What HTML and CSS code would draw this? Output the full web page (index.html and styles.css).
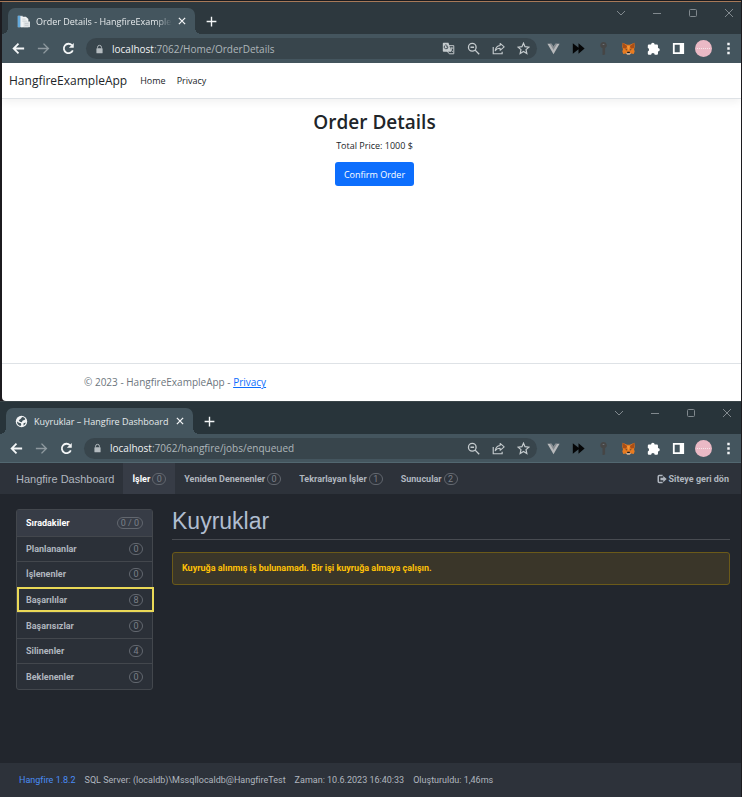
FILE: index.html
```html
<!DOCTYPE html>
<html lang="tr">
<head>
<meta charset="utf-8">
<title>Hangfire Dashboard</title>
<link rel="stylesheet" href="styles.css">
</head>
<body>
<svg class="sprite" aria-hidden="true">
  <symbol id="back" viewBox="0 0 16 16"><path d="M14 8H3M8 2.8 2.8 8 8 13.2" fill="none" stroke="currentColor" stroke-width="1.9"/></symbol>
  <symbol id="forward" viewBox="0 0 16 16"><path d="M2 8h11M8 2.8 13.2 8 8 13.2" fill="none" stroke="currentColor" stroke-width="1.5"/></symbol>
  <symbol id="reload" viewBox="0 0 16 16"><path d="M12.6 10a5 5 0 1 1-1-5.6" fill="none" stroke="currentColor" stroke-width="1.9"/><path d="M13.6 2v5.200H8.400z" fill="currentColor"/></symbol>
  <symbol id="lock" viewBox="0 0 16 16"><path d="M4.500 7V5a3.500 3.500 0 0 1 7 0v2" fill="none" stroke="currentColor" stroke-width="1.700"/><rect x="2.500" y="6.500" width="11" height="9" rx="1" fill="currentColor"/></symbol>
  <symbol id="close" viewBox="0 0 16 16"><path d="m3 3 10 10M13 3 3 13" fill="none" stroke="currentColor" stroke-width="2"/></symbol>
  <symbol id="plus" viewBox="0 0 16 16"><path d="M8 2v12M2 8h12" fill="none" stroke="currentColor" stroke-width="1.700"/></symbol>
  <symbol id="w-down" viewBox="0 0 10 10"><path d="m1 3 4 4 4-4" fill="none" stroke="currentColor"/></symbol>
  <symbol id="w-min" viewBox="0 0 10 10"><path d="M1 5.500h8" fill="none" stroke="currentColor"/></symbol>
  <symbol id="w-max" viewBox="0 0 10 10"><rect x="1.500" y="1.500" width="7" height="7" rx="1" fill="none" stroke="currentColor"/></symbol>
  <symbol id="w-close" viewBox="0 0 10 10"><path d="m1 1 8 8M9 1 1 9" fill="none" stroke="currentColor"/></symbol>
  <symbol id="translate" viewBox="0 0 16 16"><path d="M6 4.500h8.500v10H9L6 11z" fill="none" stroke="currentColor" stroke-width="1.200"/><path d="M2 1h6l3.500 11H2a1 1 0 0 1-1-1V2a1 1 0 0 1 1-1z" fill="currentColor"/><path d="M7.300 5.800H5.200M7.300 6A2.300 2.300 0 1 1 6.500 4.300" fill="none" stroke="#38454c" stroke-width="1.100"/><path d="M9.500 7.500H14M12 6.500v1c0 2-1 3-2 3.500M10.500 8.500c.5 1.500 1.500 2.500 3 3.500" fill="none" stroke="currentColor" stroke-width="1"/></symbol>
  <symbol id="zoomout" viewBox="0 0 16 16"><circle cx="6.500" cy="6.500" r="4.700" fill="none" stroke="currentColor" stroke-width="1.600"/><path d="m10 10 5 5M4.300 6.500h4.400" fill="none" stroke="currentColor" stroke-width="1.700"/></symbol>
  <symbol id="share" viewBox="0 0 16 16"><path d="M1.500 6v8.500h11V12" fill="none" stroke="currentColor" stroke-width="1.400"/><path d="M10 1.800 15 6l-5 4.200V7.800c-3 0-4.800 1-6 3 .3-3.500 2.500-6.200 6-6.600z" fill="none" stroke="currentColor" stroke-width="1.300" stroke-linejoin="round"/></symbol>
  <symbol id="star" viewBox="0 0 16 16"><path d="m8 1.500 1.900 4.300 4.700.5-3.500 3.100 1 4.700L8 11.700l-4.100 2.400 1-4.700L1.400 6.300l4.700-.5z" fill="none" stroke="currentColor" stroke-width="1.500"/></symbol>
  <symbol id="vue" viewBox="0 0 16 16"><path d="M.5 2h5L8 6.300 10.500 2h5L8 15z" fill="#b7b9bb"/><path d="M3.500 2h2.300L8 5.800 10.200 2h2.300L8 9.800z" fill="#858b90"/></symbol>
  <symbol id="ff" viewBox="0 0 16 16"><path d="M1 1.500 8 7V1.500L15.500 8 8 14.500V9l-7 5.500z" fill="#050607"/></symbol>
  <symbol id="key" viewBox="0 0 16 16"><path d="M8 0a4 4 0 0 1 2 7.500V15l-1.500 1H6.800V7.800A4 4 0 0 1 8 0z" fill="#464646"/><path d="M7 3h2" stroke="#778087" stroke-width="1"/></symbol>
  <symbol id="fox" viewBox="0 0 16 16"><path d="m.8.8 5.400 2.500h3.600L15.200.8l.5 5-.9 3 .8 3-1.200 3-3.300-.8-1.500 1.500H6.400l-1.500-1.500-3.300.8-1.200-3 .8-3-.9-3z" fill="#e87b20"/><path d="m.8.8 5.400 4-.9 3.400L1 7.500zM15.200.8l-5.400 4 .9 3.400 4.300-.7z" fill="#a94e16"/><path d="m6.200 4.800 1.800 6 1.800-6z" fill="#f39a39"/><path d="m4 8.500 2.500 1-.8 1zM12 8.500l-2.500 1 .8 1z" fill="#233447"/><path d="m5 14 1.500-1.300h3L11 14l-1.500 1.600h-3z" fill="#c0ad9e"/><path d="M6.500 12h3l.3 1.500H6.200z" fill="#1d1c1c"/></symbol>
  <symbol id="puzzle" viewBox="0 0 16 16"><path d="M5 3.200a2.200 2.200 0 0 1 4.400 0h2.800a1.300 1.300 0 0 1 1.300 1.300v2.900a2.200 2.200 0 0 1 0 4.400v2.700a1.300 1.300 0 0 1-1.300 1.300H9.500a2.200 2.200 0 0 0-4.400 0H2.300A1.300 1.300 0 0 1 1 14.500v-2.800a2.200 2.200 0 0 0 0-4.200v-3a1.300 1.300 0 0 1 1.300-1.300z" fill="#fff"/></symbol>
  <symbol id="panel" viewBox="0 0 16 16"><path d="M2.200 2.200h11.600v11.600H2.200z" fill="none" stroke="#fff" stroke-width="2.200"/><path d="M9.500 2H14v12H9.500z" fill="#fff"/></symbol>
  <symbol id="dots" viewBox="0 0 16 16"><path d="M6.500 1h3v3h-3zM6.500 6.500h3v3h-3zM6.500 12h3v3h-3z" fill="#f4f6f7"/></symbol>
  <symbol id="docs" viewBox="0 0 16 16"><path d="M1 1h6v14H1z" fill="#d5dde2"/><path d="M1 1h3v14H1z" fill="#63a9dc"/><path d="M5 2h6l3 3v10H5z" fill="#f1f3f4"/><path d="M8 8h8v7H8z" fill="#dfe3e5"/><path d="M6.500 5h4M6.500 7.500H12M9.500 10.500H14M9.500 12.800H14" stroke="#c3c9cd"/></symbol>
  <symbol id="globe" viewBox="0 0 16 16"><circle cx="8" cy="8" r="7" fill="#f2f4f5"/><path d="M8.800 2.500c2 .2 3 1 3.900 2.300l-1 1.500-2.200.5-1.200 2L6 8.300 4.500 6.600 6.800 5zM2.500 8l2.300 1.600 2.500.6.400 2-1.200 1.300A5.500 5.500 0 0 1 2.500 8zM10.500 10l2.800-.8c-.5 2-1.300 2.900-2.800 3.600z" fill="#42535b"/></symbol>
  <symbol id="exit" viewBox="0 0 16 16"><path d="M9 2.500H3.500a1.500 1.500 0 0 0-1.500 1.500v8a1.500 1.500 0 0 0 1.500 1.500H9" fill="none" stroke="currentColor" stroke-width="2.400"/><path d="M5.500 6H10V3l5.500 5-5.500 5v-3H5.500z" fill="currentColor"/></symbol>
</svg>

<section class="browser browser-shop">
  <header class="tabstrip">
    <div class="tab">
      <svg class="favicon"><use href="#docs"/></svg>
      <span class="tab-title">Order Details - HangfireExampleA</span>
      <button class="icon-btn tab-close" aria-label="Close tab"><svg><use href="#close"/></svg></button>
    </div>
    <button class="icon-btn new-tab" aria-label="New tab"><svg><use href="#plus"/></svg></button>
    <div class="window-controls">
      <button class="icon-btn" aria-label="Search tabs"><svg><use href="#w-down"/></svg></button>
      <button class="icon-btn" aria-label="Minimize"><svg><use href="#w-min"/></svg></button>
      <button class="icon-btn" aria-label="Maximize"><svg><use href="#w-max"/></svg></button>
      <button class="icon-btn" aria-label="Close"><svg><use href="#w-close"/></svg></button>
    </div>
  </header>
  <div class="toolbar">
    <button class="icon-btn" aria-label="Back"><svg class="large"><use href="#back"/></svg></button>
    <button class="icon-btn dim" aria-label="Forward"><svg class="large"><use href="#forward"/></svg></button>
    <button class="icon-btn" aria-label="Reload"><svg class="large"><use href="#reload"/></svg></button>
    <div class="address">
      <svg class="lock"><use href="#lock"/></svg>
      <span class="url"><b>localhost</b>:7062/Home/OrderDetails</span>
      <button class="icon-btn" aria-label="Translate"><svg><use href="#translate"/></svg></button>
      <button class="icon-btn" aria-label="Zoom"><svg><use href="#zoomout"/></svg></button>
      <button class="icon-btn" aria-label="Share"><svg><use href="#share"/></svg></button>
      <button class="icon-btn" aria-label="Bookmark"><svg><use href="#star"/></svg></button>
    </div>
    <button class="icon-btn" aria-label="Vue devtools"><svg><use href="#vue"/></svg></button>
    <button class="icon-btn" aria-label="Fast forward"><svg><use href="#ff"/></svg></button>
    <button class="icon-btn" aria-label="Key"><svg><use href="#key"/></svg></button>
    <button class="icon-btn" aria-label="Wallet"><svg><use href="#fox"/></svg></button>
    <button class="icon-btn" aria-label="Extensions"><svg><use href="#puzzle"/></svg></button>
    <button class="icon-btn" aria-label="Side panel"><svg><use href="#panel"/></svg></button>
    <button class="icon-btn" aria-label="Profile"><span class="avatar"></span></button>
    <button class="icon-btn" aria-label="Menu"><svg><use href="#dots"/></svg></button>
  </div>
  <div class="shop">
    <nav class="shop-nav">
      <a class="shop-brand" href="#">HangfireExampleApp</a>
      <a href="#">Home</a>
      <a href="#">Privacy</a>
    </nav>
    <main class="order">
      <h1>Order Details</h1>
      <p>Total Price: 1000 $</p>
      <button class="confirm">Confirm Order</button>
    </main>
    <footer class="shop-footer">© 2023 - HangfireExampleApp - <a href="#">Privacy</a></footer>
  </div>
</section>

<section class="browser browser-dash">
  <header class="tabstrip">
    <div class="tab">
      <svg class="favicon"><use href="#globe"/></svg>
      <span class="tab-title">Kuyruklar – Hangfire Dashboard</span>
      <button class="icon-btn tab-close" aria-label="Close tab"><svg><use href="#close"/></svg></button>
    </div>
    <button class="icon-btn new-tab" aria-label="New tab"><svg><use href="#plus"/></svg></button>
    <div class="window-controls">
      <button class="icon-btn" aria-label="Search tabs"><svg><use href="#w-down"/></svg></button>
      <button class="icon-btn" aria-label="Minimize"><svg><use href="#w-min"/></svg></button>
      <button class="icon-btn" aria-label="Maximize"><svg><use href="#w-max"/></svg></button>
      <button class="icon-btn" aria-label="Close"><svg><use href="#w-close"/></svg></button>
    </div>
  </header>
  <div class="toolbar">
    <button class="icon-btn" aria-label="Back"><svg class="large"><use href="#back"/></svg></button>
    <button class="icon-btn dim" aria-label="Forward"><svg class="large"><use href="#forward"/></svg></button>
    <button class="icon-btn" aria-label="Reload"><svg class="large"><use href="#reload"/></svg></button>
    <div class="address">
      <svg class="lock"><use href="#lock"/></svg>
      <span class="url"><b>localhost</b>:7062/hangfire/jobs/enqueued</span>
      <button class="icon-btn" aria-label="Zoom"><svg><use href="#zoomout"/></svg></button>
      <button class="icon-btn" aria-label="Share"><svg><use href="#share"/></svg></button>
      <button class="icon-btn" aria-label="Bookmark"><svg><use href="#star"/></svg></button>
    </div>
    <button class="icon-btn" aria-label="Vue devtools"><svg><use href="#vue"/></svg></button>
    <button class="icon-btn" aria-label="Fast forward"><svg><use href="#ff"/></svg></button>
    <button class="icon-btn" aria-label="Key"><svg><use href="#key"/></svg></button>
    <button class="icon-btn" aria-label="Wallet"><svg><use href="#fox"/></svg></button>
    <button class="icon-btn" aria-label="Extensions"><svg><use href="#puzzle"/></svg></button>
    <button class="icon-btn" aria-label="Side panel"><svg><use href="#panel"/></svg></button>
    <button class="icon-btn" aria-label="Profile"><span class="avatar"></span></button>
    <button class="icon-btn" aria-label="Menu"><svg><use href="#dots"/></svg></button>
  </div>
  <div class="dash">
    <nav class="dash-nav">
      <a class="dash-brand" href="#">Hangfire Dashboard</a>
      <a class="dash-link active" href="#">İşler <span class="badge">0</span></a>
      <a class="dash-link" href="#">Yeniden Denenenler <span class="badge">0</span></a>
      <a class="dash-link" href="#">Tekrarlayan İşler <span class="badge">1</span></a>
      <a class="dash-link" href="#">Sunucular <span class="badge">2</span></a>
      <a class="dash-exit" href="#"><svg><use href="#exit"/></svg>Siteye geri dön</a>
    </nav>
    <div class="dash-body">
      <aside class="menu">
        <a class="menu-item active" href="#">Sıradakiler <span class="badge">0 / 0</span></a>
        <a class="menu-item" href="#">Planlananlar <span class="badge">0</span></a>
        <a class="menu-item" href="#">İşlenenler <span class="badge">0</span></a>
        <a class="menu-item marked" href="#">Başarılılar <span class="badge">8</span></a>
        <a class="menu-item" href="#">Başarısızlar <span class="badge">0</span></a>
        <a class="menu-item" href="#">Silinenler <span class="badge">4</span></a>
        <a class="menu-item" href="#">Beklenenler <span class="badge">0</span></a>
      </aside>
      <main class="queues">
        <h1>Kuyruklar</h1>
        <p class="alert">Kuyruğa alınmış iş bulunamadı. Bir işi kuyruğa almaya çalışın.</p>
      </main>
    </div>
    <footer class="dash-footer">
      <a href="#">Hangfire 1.8.2</a>
      <span>SQL Server: (localdb)\Mssqllocaldb@HangfireTest</span>
      <span>Zaman: 10.6.2023 16:40:33</span>
      <span>Oluşturuldu: 1,46ms</span>
    </footer>
  </div>
</section>
</body>
</html>
```
FILE: styles.css
```css
* {
  box-sizing: border-box;
}

body {
  margin: 0;
  min-height: 100vh;
  padding-right: 1px;
  display: flex;
  flex-direction: column;
  background: #1c1b1f;
  font-family: "Open Sans", "Noto Sans", sans-serif;
  font-size: 10px;
}

a {
  color: inherit;
  text-decoration: none;
}

button {
  font: inherit;
}

.sprite {
  display: none;
}

/* Browser frame */

.browser {
  display: flex;
  flex-direction: column;
}

.browser-shop {
  --strip: #2d383e;
  margin-top: 1px;
  padding-left: 2px;
  border-top: 1px solid #a77958;
}

.browser-dash {
  --strip: #28343a;
  flex: 1;
  border-top: 1px solid #394448;
}

.browser-dash .tabstrip {
  padding-right: 2px;
}

.browser-dash .toolbar {
  border-bottom: 1px solid #526770;
}

.tabstrip {
  display: flex;
  align-items: flex-end;
  height: 32px;
  padding-left: 6px;
  background: var(--strip);
}

.tab {
  position: relative;
  display: flex;
  align-items: center;
  width: 187px;
  height: 26px;
  padding: 0 3px 0 9px;
  border-radius: 7px 7px 0 0;
  background: #44555e;
  color: #e6eaec;
  font-size: 9px;
}

.tab::before,
.tab::after {
  content: "";
  position: absolute;
  bottom: 0;
  width: 6px;
  height: 6px;
}

.tab::before {
  left: -6px;
  background: radial-gradient(circle at 0 0, transparent 6px, #44555e 6px);
}

.tab::after {
  right: -6px;
  background: radial-gradient(circle at 100% 0, transparent 6px, #44555e 6px);
}

.favicon {
  flex: none;
  width: 13px;
  height: 13px;
  margin-right: 6px;
}

.tab-title {
  flex: 1;
  overflow: hidden;
  white-space: nowrap;
  mask-image: linear-gradient(to right, #000 88%, transparent);
}

.browser-dash .tab-title {
  mask-image: none;
}

.icon-btn {
  display: flex;
  flex: none;
  align-items: center;
  justify-content: center;
  width: 25px;
  height: 21px;
  padding: 0;
  border: 0;
  background: none;
  color: #f4f6f7;
}

.icon-btn svg {
  width: 13px;
  height: 13px;
}

.icon-btn svg.large {
  width: 15px;
  height: 15px;
}

.icon-btn.tab-close {
  width: 20px;
}

.tab-close svg {
  width: 10px;
  height: 10px;
}

.new-tab {
  align-self: center;
  margin: 6px 0 0 4px;
}

.window-controls {
  display: flex;
  align-self: flex-start;
  margin-left: auto;
  color: #81898e;
}

.window-controls .icon-btn {
  width: 36px;
  color: inherit;
}

.window-controls .icon-btn:last-child {
  width: 24px;
  margin-left: 6px;
}

.window-controls .icon-btn svg {
  width: 10px;
  height: 10px;
}

.toolbar {
  display: flex;
  align-items: center;
  height: 29px;
  padding-left: 4px;
  background: #44555e;
}

.icon-btn.dim {
  color: #8e999f;
}

.address {
  display: flex;
  flex: 1;
  align-items: center;
  height: 21px;
  margin: 0 4px 0 5px;
  padding: 0 1px 0 9px;
  border-radius: 11px;
  background: #38454c;
}

.address .icon-btn {
  color: #c5cbce;
}

.lock {
  width: 9px;
  height: 10px;
  margin-right: 8px;
  color: #b4bbbf;
}

.url {
  flex: 1;
  color: #aeb6ba;
}

.url b {
  color: #f1f3f4;
  font-weight: 400;
}

.avatar {
  display: flex;
  align-items: center;
  justify-content: center;
  width: 17px;
  height: 17px;
  border-radius: 50%;
  background: #eab9c5;
}

.avatar::before {
  content: "";
  width: 13px;
  border-top: 1px dotted #f8e6ea;
}

/* Order page */

.shop {
  display: flex;
  flex-direction: column;
  min-height: 338px;
  background: #fff;
  color: #212529;
  border-bottom-left-radius: 4px;
}

.shop-nav {
  display: flex;
  align-items: center;
  gap: 11px;
  height: 36px;
  padding-left: 7px;
  border-bottom: 1px solid #dee2e6;
  box-shadow: 0 3px 8px rgba(0, 0, 0, .06);
  font-size: 9px;
}

.shop-brand {
  margin-right: 2px;
  font-size: 12px;
}

.order {
  display: flex;
  flex: 1;
  flex-direction: column;
  align-items: center;
  padding: 11px 0 0 6px;
  font-size: 9px;
}

.order h1 {
  margin: 0;
  font-size: 19px;
  font-weight: 600;
  line-height: 25px;
}

.order p {
  margin: 3px 0 9px;
  line-height: 15px;
}

.confirm {
  height: 24px;
  padding: 0 9px;
  border: 0;
  border-radius: 3px;
  background: #0d6efd;
  color: #fff;
}

.shop-footer {
  padding: 0 0 0 82px;
  border-top: 1px solid #dee2e6;
  color: #6c757d;
  line-height: 37px;
}

.shop-footer a {
  color: #0d6efd;
  text-decoration: underline;
}

/* Dashboard */

.dash {
  display: flex;
  flex: 1;
  flex-direction: column;
  background: #22262d;
  color: #b0b6bf;
  font-family: Roboto, "Liberation Sans", Arial, sans-serif;
  font-size: 9px;
}

.dash-nav {
  display: flex;
  height: 31px;
  padding: 0 12px 0 16px;
  background: #2d323a;
  font-weight: 700;
}

.dash-nav a {
  display: flex;
  align-items: center;
}

.dash-nav .dash-brand {
  margin-right: 9px;
  font-family: "Liberation Sans", Arial, sans-serif;
  font-size: 11px;
  font-weight: 400;
}

.dash-nav .dash-link {
  gap: 2px;
  padding: 0 9px;
}

.dash-nav .active {
  background: #373c46;
  color: #fff;
}

.dash-nav .dash-exit {
  gap: 2px;
  margin-left: auto;
}

.dash-exit svg {
  width: 10px;
  height: 10px;
}

.badge {
  display: inline-flex;
  align-items: center;
  justify-content: center;
  min-width: 14px;
  height: 12px;
  padding: 0 3px;
  border: 1px solid #62676f;
  border-radius: 6px;
  color: #7b8088;
  font-weight: 400;
}

.dash-body {
  display: flex;
  flex: 1;
  gap: 19px;
  padding: 15px 11px 0 16px;
}

.menu {
  display: grid;
  grid-auto-rows: 1fr;
  align-self: flex-start;
  flex: none;
  width: 137px;
  min-height: 181px;
  border: 1px solid #43474d;
  border-radius: 3px;
  background: #2b3038;
  font-weight: 700;
}

.menu-item {
  position: relative;
  display: flex;
  align-items: center;
  justify-content: space-between;
  padding: 0 9px;
}

.menu-item + .menu-item {
  border-top: 1px solid #43474d;
}

.menu-item.active {
  background: #373c46;
  color: #fff;
}

.marked::after {
  content: "";
  position: absolute;
  inset: -1px -2px 0 0;
  border: 2px solid #ead957;
}

.queues {
  flex: 1;
}

.queues h1 {
  margin: 0 0 12px;
  padding-bottom: 6px;
  border-bottom: 1px solid #484b51;
  color: #b0bdd0;
  font-family: "Liberation Sans", Arial, sans-serif;
  font-size: 23px;
  font-weight: 400;
  line-height: 24px;
}

.alert {
  margin: 0;
  padding: 0 9px;
  border: 1px solid #6b5a19;
  border-radius: 3px;
  background: #3a3629;
  color: #ffc107;
  font-weight: 700;
  line-height: 31px;
}

.dash-footer {
  display: flex;
  gap: 9px;
  padding: 0 19px;
  background: #2d323a;
  line-height: 34px;
}

.dash-footer a {
  color: #4a8df5;
}
```
